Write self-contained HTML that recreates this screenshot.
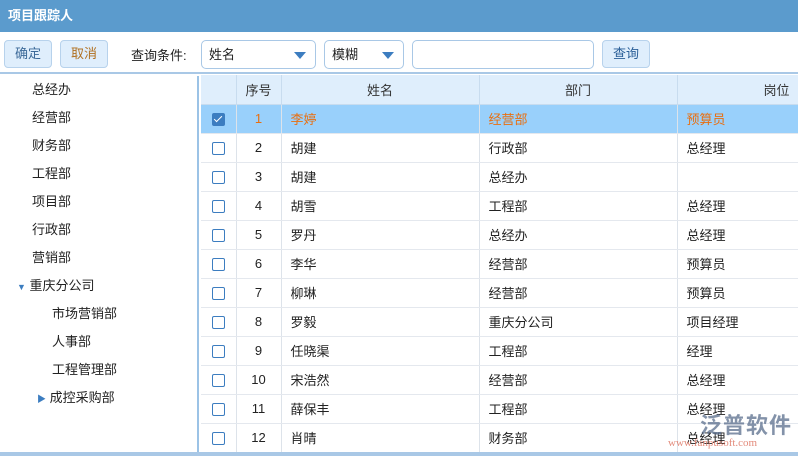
<!DOCTYPE html>
<html><head><meta charset="utf-8"><style>
*{margin:0;padding:0;box-sizing:border-box}
body{width:798px;height:456px;overflow:hidden;background:#fff;font-family:"Liberation Sans","Noto Sans CJK SC",sans-serif;font-size:13px;color:#222;position:relative}
.title{position:absolute;left:0;top:0;width:798px;height:32px;background:#5b9bcd;color:#fff;font-weight:bold;font-size:13px;line-height:32px;padding-left:8px}
.bar{position:absolute;top:32px;left:0;width:798px;height:42px;border-bottom:2px solid #a9c8e6}
.btn{position:absolute;top:8px;height:28px;border:1px solid #b7d2ec;border-radius:4px;background:#dfeefc;text-align:center;line-height:26px;font-size:13px}
.sel{position:absolute;top:8px;height:29px;border:1px solid #a9c8e6;border-radius:5px;background:#fff;line-height:27px;padding-left:7px}
.arr:after{content:"";position:absolute;right:9px;top:11px;border-left:6px solid transparent;border-right:6px solid transparent;border-top:7px solid #3c7dc0}
.left{position:absolute;left:0;top:76px;width:199px;height:380px;border-right:2px solid #9cc3e6}
.left div{height:28px;line-height:28px;padding-left:32px}
.grid{position:absolute;left:201px;top:75px;width:597px}
table{border-collapse:collapse;table-layout:fixed;width:700px}
td{height:29px;border-right:1px solid #dde3ea;border-bottom:1px solid #e4e8ee;padding-left:9px;white-space:nowrap;overflow:hidden}
th{height:29px;background:#dfeefc;border-right:1px solid #c8dcef;border-bottom:1px solid #c8dcef;font-weight:normal;color:#333}
td.c{text-align:center;padding:0}
.cb{display:inline-block;width:13px;height:13px;border:1.5px solid #3c7dc0;border-radius:2px;vertical-align:middle;background:#fff;position:relative}
tr.s td{background:#99d0fb;color:#e86f10}
tr.s .cb{background:#3c7dc0}
tr.s .cb:after{content:"";position:absolute;left:3px;top:0px;width:3px;height:7px;border-right:1.5px solid #fff;border-bottom:1.5px solid #fff;transform:rotate(45deg)}
</style></head><body>
<div class="title">项目跟踪人</div>
<div class="bar">
<div class="btn" style="left:4px;width:48px;color:#3c6a99">确定</div>
<div class="btn" style="left:60px;width:48px;color:#b07020">取消</div>
<div style="position:absolute;left:131px;top:13px">查询条件:</div>
<div class="sel arr" style="left:201px;width:115px">姓名</div>
<div class="sel arr" style="left:324px;width:80px">模糊</div>
<div class="sel" style="left:412px;width:182px"></div>
<div class="btn" style="left:602px;width:48px;color:#2a5f98">查询</div>
</div>
<div class="left">
<div>总经办</div><div>经营部</div><div>财务部</div><div>工程部</div><div>项目部</div><div>行政部</div><div>营销部</div>
<div style="padding-left:17px"><span style="font-size:9px;color:#3c7dc0">▼</span> 重庆分公司</div>
<div style="padding-left:52px">市场营销部</div><div style="padding-left:52px">人事部</div><div style="padding-left:52px">工程管理部</div>
<div style="padding-left:37px"><span style="font-size:9px;color:#3c7dc0">▶</span> 成控采购部</div>
</div>
<div class="grid"><table>
<colgroup><col style="width:35px"><col style="width:45px"><col style="width:198px"><col style="width:198px"><col style="width:224px"></colgroup>
<tr><th></th><th>序号</th><th>姓名</th><th>部门</th><th style="text-align:left;padding-left:86px">岗位</th></tr>
<tr class="s"><td class="c"><span class="cb"></span></td><td class="c">1</td><td>李婷</td><td>经营部</td><td>预算员</td></tr>
<tr><td class="c"><span class="cb"></span></td><td class="c">2</td><td>胡建</td><td>行政部</td><td>总经理</td></tr>
<tr><td class="c"><span class="cb"></span></td><td class="c">3</td><td>胡建</td><td>总经办</td><td></td></tr>
<tr><td class="c"><span class="cb"></span></td><td class="c">4</td><td>胡雪</td><td>工程部</td><td>总经理</td></tr>
<tr><td class="c"><span class="cb"></span></td><td class="c">5</td><td>罗丹</td><td>总经办</td><td>总经理</td></tr>
<tr><td class="c"><span class="cb"></span></td><td class="c">6</td><td>李华</td><td>经营部</td><td>预算员</td></tr>
<tr><td class="c"><span class="cb"></span></td><td class="c">7</td><td>柳琳</td><td>经营部</td><td>预算员</td></tr>
<tr><td class="c"><span class="cb"></span></td><td class="c">8</td><td>罗毅</td><td>重庆分公司</td><td>项目经理</td></tr>
<tr><td class="c"><span class="cb"></span></td><td class="c">9</td><td>任晓渠</td><td>工程部</td><td>经理</td></tr>
<tr><td class="c"><span class="cb"></span></td><td class="c">10</td><td>宋浩然</td><td>经营部</td><td>总经理</td></tr>
<tr><td class="c"><span class="cb"></span></td><td class="c">11</td><td>薛保丰</td><td>工程部</td><td>总经理</td></tr>
<tr><td class="c"><span class="cb"></span></td><td class="c">12</td><td>肖晴</td><td>财务部</td><td>总经理</td></tr>
</table></div>
<div style="position:absolute;left:0;top:452px;width:798px;height:4px;background:#a9c8e6"></div>
<div style="position:absolute;left:700px;top:408px;font-size:22px;font-weight:bold;color:rgba(90,110,140,0.75);letter-spacing:1px">泛普软件</div>
<div style="position:absolute;left:668px;top:437px;font-size:11px;font-family:'Liberation Serif',serif;color:rgba(220,110,90,0.8)">www.fanpusoft.com</div>
</body></html>
